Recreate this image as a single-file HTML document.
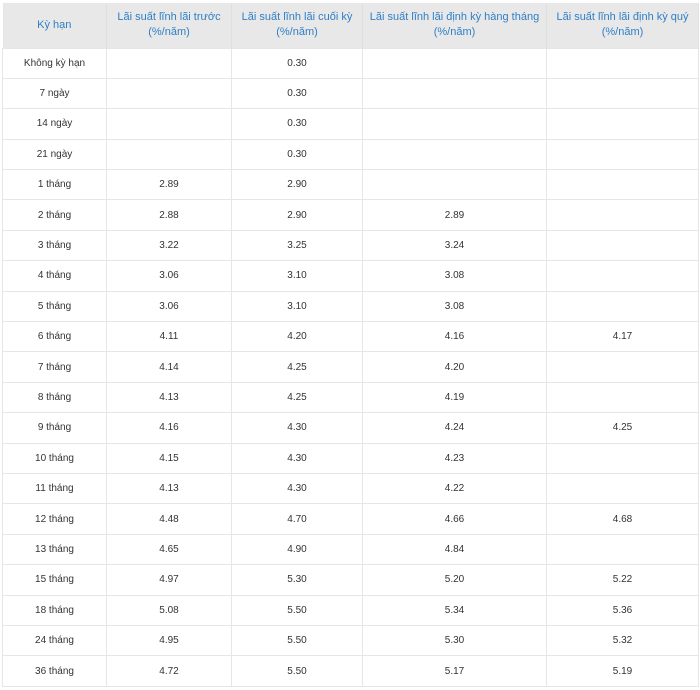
<html><head><style>
body{margin:0;background:#fff;font-family:"Liberation Sans",Arial,sans-serif;}
table{position:absolute;left:2px;top:3px;width:697px;border-collapse:collapse;table-layout:fixed;}
th{background:#e8e8e9;color:#2f7fc4;font-weight:normal;font-size:11px;line-height:15px;height:45px;padding:0;border-right:1px solid #e0e0e0;vertical-align:middle;}
td{height:30.4px;padding:0;text-align:center;font-size:10px;color:#333;border:1px solid #e6e6e6;}
</style></head><body>
<table>
<colgroup><col style="width:104px"><col style="width:125px"><col style="width:131px"><col style="width:184px"><col></colgroup>
<tr><th>Kỳ hạn</th><th>Lãi suất lĩnh lãi trước<br>(%/năm)</th><th>Lãi suất lĩnh lãi cuối kỳ<br>(%/năm)</th><th>Lãi suất lĩnh lãi định kỳ hàng tháng<br>(%/năm)</th><th>Lãi suất lĩnh lãi định kỳ quý<br>(%/năm)</th></tr>
<tr><td>Không kỳ hạn</td><td></td><td>0.30</td><td></td><td></td></tr>
<tr><td>7 ngày</td><td></td><td>0.30</td><td></td><td></td></tr>
<tr><td>14 ngày</td><td></td><td>0.30</td><td></td><td></td></tr>
<tr><td>21 ngày</td><td></td><td>0.30</td><td></td><td></td></tr>
<tr><td>1 tháng</td><td>2.89</td><td>2.90</td><td></td><td></td></tr>
<tr><td>2 tháng</td><td>2.88</td><td>2.90</td><td>2.89</td><td></td></tr>
<tr><td>3 tháng</td><td>3.22</td><td>3.25</td><td>3.24</td><td></td></tr>
<tr><td>4 tháng</td><td>3.06</td><td>3.10</td><td>3.08</td><td></td></tr>
<tr><td>5 tháng</td><td>3.06</td><td>3.10</td><td>3.08</td><td></td></tr>
<tr><td>6 tháng</td><td>4.11</td><td>4.20</td><td>4.16</td><td>4.17</td></tr>
<tr><td>7 tháng</td><td>4.14</td><td>4.25</td><td>4.20</td><td></td></tr>
<tr><td>8 tháng</td><td>4.13</td><td>4.25</td><td>4.19</td><td></td></tr>
<tr><td>9 tháng</td><td>4.16</td><td>4.30</td><td>4.24</td><td>4.25</td></tr>
<tr><td>10 tháng</td><td>4.15</td><td>4.30</td><td>4.23</td><td></td></tr>
<tr><td>11 tháng</td><td>4.13</td><td>4.30</td><td>4.22</td><td></td></tr>
<tr><td>12 tháng</td><td>4.48</td><td>4.70</td><td>4.66</td><td>4.68</td></tr>
<tr><td>13 tháng</td><td>4.65</td><td>4.90</td><td>4.84</td><td></td></tr>
<tr><td>15 tháng</td><td>4.97</td><td>5.30</td><td>5.20</td><td>5.22</td></tr>
<tr><td>18 tháng</td><td>5.08</td><td>5.50</td><td>5.34</td><td>5.36</td></tr>
<tr><td>24 tháng</td><td>4.95</td><td>5.50</td><td>5.30</td><td>5.32</td></tr>
<tr><td>36 tháng</td><td>4.72</td><td>5.50</td><td>5.17</td><td>5.19</td></tr>
</table>
</body></html>
